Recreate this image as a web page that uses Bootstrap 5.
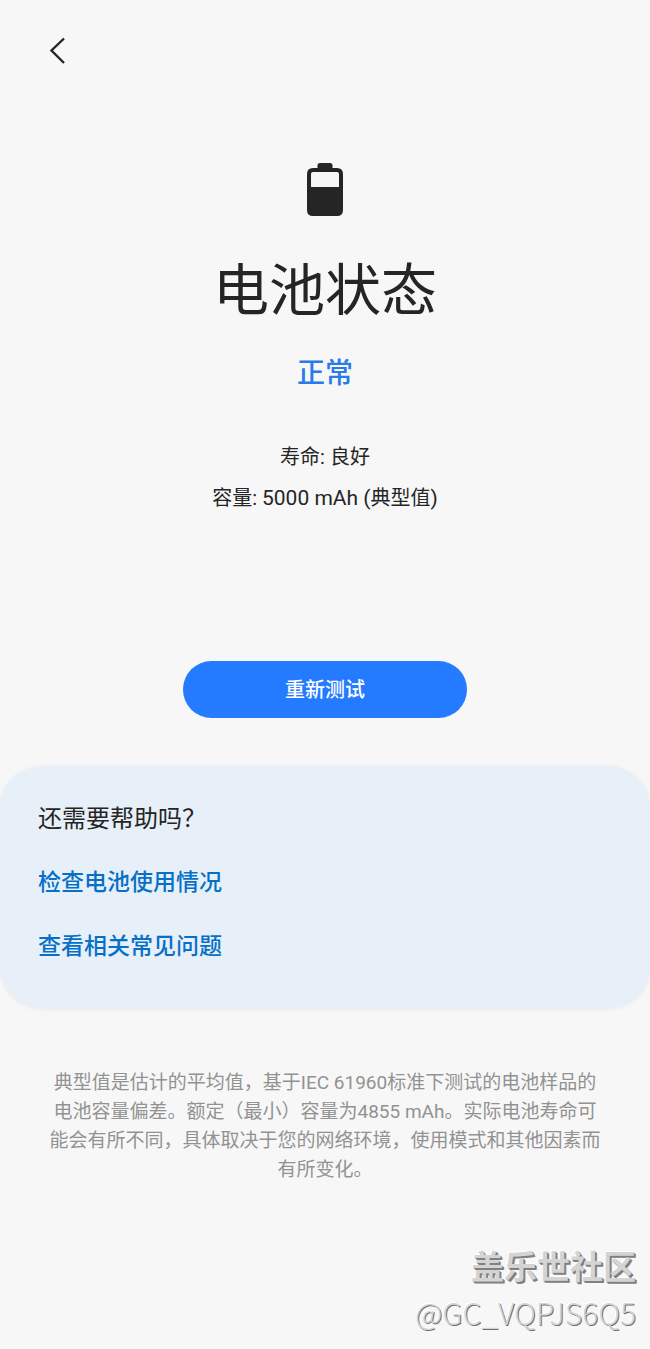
<!DOCTYPE html>
<html lang="zh-CN">
<head>
<meta charset="utf-8">
<meta name="viewport" content="width=device-width, initial-scale=1">
<title>电池状态</title>
<link href="https://cdn.jsdelivr.net/npm/bootstrap@5.3.0/dist/css/bootstrap.min.css" rel="stylesheet">
<style>
body { background: #f7f7f7; color: #252525; font-family: Roboto, "Noto Sans CJK SC", sans-serif; }
.top-bar { height: 100px; padding-left: 40px; }
.back-btn { width: 40px; height: 40px; }
.back-btn svg, .battery-icon { display: block; }
.battery-icon { margin-top: 62px; }
.page-title { font-size: 56px; line-height: 80px; font-weight: 400; margin-top: 34px; }
.status-text { font-size: 28px; line-height: 40px; font-weight: 500; color: #2a7ae8; margin-top: 23px; }
.details { font-size: 20px; line-height: 41px; margin-top: 43px; }
.capacity { font-size: 21px; }
.retest-btn { width: 284px; max-width: 100%; height: 57px; margin-top: 142px; font-size: 20px; font-weight: 500; color: #fff; background: #257bff; }
.retest-btn:hover { color: #fff; background: #1769e8; }
.help-panel { margin-top: 48px; padding: 37px 38px 45px; border-radius: 42px; background: #e7f0f8; box-shadow: 0 1px 4px rgba(90,110,130,.1); gap: 32px; line-height: 32px; }
.help-title { font-size: 24px; line-height: 32px; font-weight: 400; }
.help-link { font-size: 23px; font-weight: 500; color: #0670c8; }
.note { margin: 60px 48px 0; font-size: 19px; line-height: 29px; color: #929292; }
.signature { padding: 60px 14px 14px; color: #d4d4d4; }
.community { font-size: 33px; line-height: 48px; font-weight: 700; text-shadow: 1px 1px 0 #808080, 2px 2px 0 #808080, -1px -1px 0 #fff; }
.account { font-family: "Noto Sans CJK SC", sans-serif; font-size: 30px; line-height: 40px; font-weight: 300; text-shadow: 1px 1px 0 #707070, -1px -1px 0 #fff; }
</style>
</head>
<body>
<header class="top-bar d-flex align-items-center">
  <button type="button" class="back-btn btn border-0 p-0" aria-label="返回">
    <svg width="40" height="40" viewBox="0 0 40 40" fill="none" stroke="#252525" stroke-width="2.4"><path d="M24 8.500 11.500 20.500l12.500 12.500"/></svg>
  </button>
</header>
<main>
  <section class="d-flex flex-column align-items-center text-center px-3">
    <svg class="battery-icon" width="36" height="55" viewBox="0 0 36 55" aria-hidden="true">
      <path fill="#252525" fill-rule="evenodd" d="M13 1h10q2.500 0 2.500 2.500V6H30q6 0 6 6v36q0 6-6 6H6q-6 0-6-6V12q0-6 6-6h4.500V3.500Q10.500 1 13 1zM6 10q-2 0-2 2v13h28V12q0-2-2-2z"/>
    </svg>
    <h1 class="page-title mb-0">电池状态</h1>
    <p class="status-text mb-0">正常</p>
    <div class="details">
      <div>寿命: 良好</div>
      <div>容量: <span class="capacity">5000 mAh (</span>典型值<span class="capacity">)</span></div>
    </div>
    <button type="button" class="retest-btn btn border-0 rounded-pill">重新测试</button>
  </section>
  <section class="help-panel d-flex flex-column align-items-start">
    <h2 class="help-title mb-0">还需要帮助吗？</h2>
    <a class="help-link text-decoration-none" href="#usage">检查电池使用情况</a>
    <a class="help-link text-decoration-none" href="#faq">查看相关常见问题</a>
  </section>
  <p class="note text-center">典型值是估计的平均值，基于IEC 61960标准下测试的电池样品的电池容量偏差。额定（最小）容量为4855 mAh。实际电池寿命可能会有所不同，具体取决于您的网络环境，使用模式和其他因素而有所变化。</p>
</main>
<footer class="signature text-end">
  <div class="community">盖乐世社区</div>
  <div class="account">@GC_VQPJS6Q5</div>
</footer>
<script src="https://cdn.jsdelivr.net/npm/bootstrap@5.3.0/dist/js/bootstrap.bundle.min.js"></script>
</body>
</html>
